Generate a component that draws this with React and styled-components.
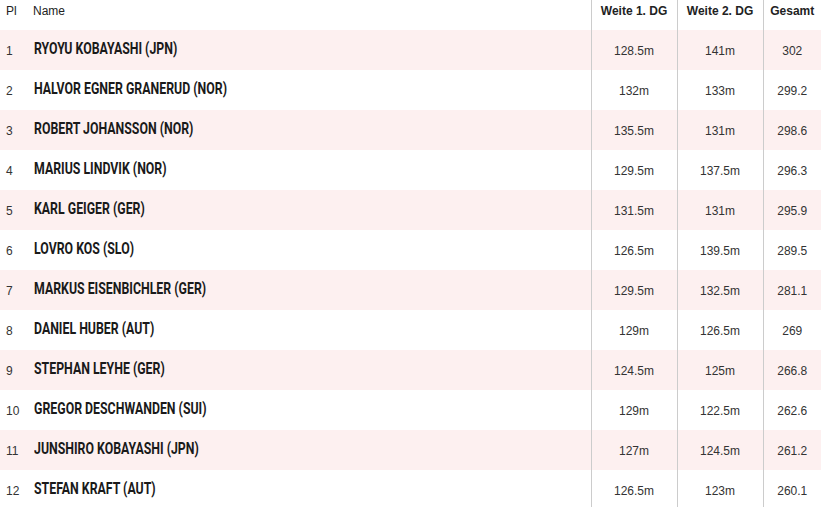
import React from 'react'
import styled, { createGlobalStyle } from 'styled-components'

const GlobalStyle = createGlobalStyle`
    body {
        margin: 0;
        background: #fff;
        font-family: "Liberation Sans", Arial, sans-serif;
    }
`

const Table = styled.table`
    width: 821px;
    border-collapse: collapse;
    table-layout: fixed;
    color: #222;
    font-size: 12px;
`
const HeadCell = styled.th`
    height: 26px;
    padding: 4px 0 0 ${p => p.$pad || 0}px;
    vertical-align: top;
    text-align: ${p => p.$align || 'center'};
    font-weight: ${p => p.$bold ? 700 : 400};
    color: #222;
    border-left: ${p => p.$border ? '1px solid #ccc' : 'none'};
`
const Row = styled.tr`
    height: 40px;
    background: ${p => p.$odd ? '#fdf0f0' : '#fff'};
`
const Rank = styled.td`
    padding: 1px 0 0 6px;
    color: #333;
`
const Name = styled.td`
    padding: 0 0 4px 7px;
    white-space: nowrap;
    overflow: hidden;
`
const NameText = styled.span`
    display: inline-block;
    font-family: "Roboto", "Liberation Sans", sans-serif;
    font-weight: 700;
    font-size: 17px;
    color: #1a1a1a;
    transform: scaleX(0.725);
    transform-origin: left center;
`
const Value = styled.td`
    padding: 1px 0 0 0;
    text-align: center;
    color: #333;
    border-left: 1px solid #ccc;
`

const results = [
    ['RYOYU KOBAYASHI (JPN)', '128.5m', '141m', '302'],
    ['HALVOR EGNER GRANERUD (NOR)', '132m', '133m', '299.2'],
    ['ROBERT JOHANSSON (NOR)', '135.5m', '131m', '298.6'],
    ['MARIUS LINDVIK (NOR)', '129.5m', '137.5m', '296.3'],
    ['KARL GEIGER (GER)', '131.5m', '131m', '295.9'],
    ['LOVRO KOS (SLO)', '126.5m', '139.5m', '289.5'],
    ['MARKUS EISENBICHLER (GER)', '129.5m', '132.5m', '281.1'],
    ['DANIEL HUBER (AUT)', '129m', '126.5m', '269'],
    ['STEPHAN LEYHE (GER)', '124.5m', '125m', '266.8'],
    ['GREGOR DESCHWANDEN (SUI)', '129m', '122.5m', '262.6'],
    ['JUNSHIRO KOBAYASHI (JPN)', '127m', '124.5m', '261.2'],
    ['STEFAN KRAFT (AUT)', '126.5m', '123m', '260.1'],
]

export default function App() {
    return (
        <>
            <GlobalStyle />
            <Table>
                <colgroup>
                    <col style={{ width: 27 }} />
                    <col />
                    <col style={{ width: 86 }} />
                    <col style={{ width: 86 }} />
                    <col style={{ width: 58 }} />
                </colgroup>
                <thead>
                    <tr>
                        <HeadCell $align="left" $pad={6}>Pl</HeadCell>
                        <HeadCell $align="left" $pad={6}>Name</HeadCell>
                        <HeadCell $bold $border>Weite 1. DG</HeadCell>
                        <HeadCell $bold $border>Weite 2. DG</HeadCell>
                        <HeadCell $bold $border>Gesamt</HeadCell>
                    </tr>
                </thead>
                <tbody>
                    {results.map((r, i) => (
                        <Row key={i} $odd={i % 2 === 0}>
                            <Rank>{i + 1}</Rank>
                            <Name><NameText>{r[0]}</NameText></Name>
                            <Value>{r[1]}</Value>
                            <Value>{r[2]}</Value>
                            <Value>{r[3]}</Value>
                        </Row>
                    ))}
                </tbody>
            </Table>
        </>
    )
}
